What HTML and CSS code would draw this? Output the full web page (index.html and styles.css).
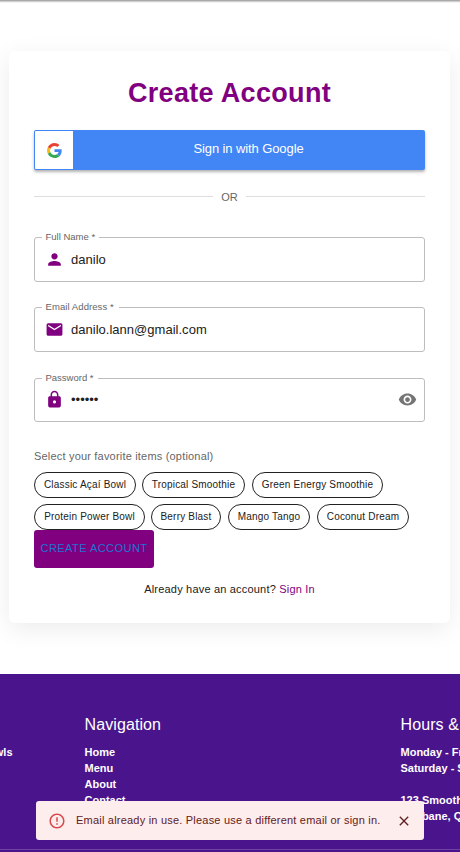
FILE: index.html
```html
<!DOCTYPE html>
<html lang="en">
<head>
<meta charset="utf-8">
<title>Create Account</title>
<link rel="stylesheet" href="styles.css">
</head>
<body>
<div class="appbar-edge"></div>
<main class="page">
  <section class="card">
    <h1 class="title">Create Account</h1>
    <button class="google" type="button">
      <span class="google-logo">
        <svg width="15" height="15" viewBox="0 0 48 48"><path fill="#EA4335" d="M24 9.5c3.54 0 6.71 1.22 9.21 3.6l6.85-6.85C35.9 2.38 30.47 0 24 0 14.62 0 6.51 5.38 2.56 13.22l7.98 6.19C12.43 13.72 17.74 9.5 24 9.5z"/><path fill="#4285F4" d="M46.98 24.55c0-1.57-.15-3.09-.38-4.55H24v9.02h12.94c-.58 2.96-2.26 5.48-4.78 7.18l7.73 6c4.51-4.18 7.09-10.36 7.09-17.65z"/><path fill="#FBBC05" d="M10.53 28.59c-.48-1.45-.76-2.99-.76-4.59s.27-3.14.76-4.59l-7.98-6.19C.92 16.46 0 20.12 0 24c0 3.88.92 7.54 2.56 10.78l7.97-6.19z"/><path fill="#34A853" d="M24 48c6.48 0 11.93-2.13 15.89-5.81l-7.73-6c-2.15 1.45-4.92 2.3-8.16 2.3-6.26 0-11.57-4.22-13.47-9.91l-7.98 6.19C6.51 42.62 14.62 48 24 48z"/></svg>
      </span>
      <span class="google-text">Sign in with Google</span>
    </button>
    <div class="divider"><span>OR</span></div>
    <form class="form">
      <fieldset class="field">
        <legend>Full Name *</legend>
        <svg class="icon" viewBox="0 0 24 24"><path d="M12 12c2.210 0 4-1.790 4-4s-1.790-4-4-4-4 1.790-4 4 1.790 4 4 4zm0 2c-2.670 0-8 1.340-8 4v2h16v-2c0-2.660-5.330-4-8-4z"/></svg>
        <span class="value">danilo</span>
      </fieldset>
      <fieldset class="field">
        <legend class="legend-email">Email Address *</legend>
        <svg class="icon" viewBox="0 0 24 24"><path d="M20 4H4c-1.100 0-1.990.9-1.990 2L2 18c0 1.100.9 2 2 2h16c1.100 0 2-.9 2-2V6c0-1.100-.9-2-2-2zm0 4-8 5-8-5V6l8 5 8-5v2z"/></svg>
        <span class="value">danilo.lann@gmail.com</span>
      </fieldset>
      <fieldset class="field password">
        <legend>Password *</legend>
        <svg class="icon" viewBox="0 0 24 24"><path d="M18 8h-1V6c0-2.760-2.240-5-5-5S7 3.240 7 6v2H6c-1.100 0-2 .9-2 2v10c0 1.100.9 2 2 2h12c1.100 0 2-.9 2-2V10c0-1.100-.9-2-2-2zm-6 9c-1.100 0-2-.9-2-2s.9-2 2-2 2 .9 2 2-.9 2-2 2zm3.100-9H8.900V6c0-1.710 1.390-3.100 3.100-3.100s3.100 1.390 3.100 3.100v2z"/></svg>
        <span class="value">••••••</span>
        <svg class="icon eye" viewBox="0 0 24 24"><path d="M12 4.500C7 4.500 2.730 7.610 1 12c1.730 4.390 6 7.500 11 7.500s9.270-3.110 11-7.500c-1.730-4.390-6-7.500-11-7.500zM12 17c-2.760 0-5-2.240-5-5s2.240-5 5-5 5 2.240 5 5-2.240 5-5 5zm0-8c-1.660 0-3 1.340-3 3s1.340 3 3 3 3-1.340 3-3-1.340-3-3-3z"/></svg>
      </fieldset>
      <p class="hint">Select your favorite items (optional)</p>
      <div class="chips">
        <div class="chip-row">
          <span class="chip w1">Classic Açaí Bowl</span><span class="chip w2">Tropical Smoothie</span><span class="chip w3">Green Energy Smoothie</span>
        </div>
        <div class="chip-row">
          <span class="chip w4">Protein Power Bowl</span><span class="chip w5">Berry Blast</span><span class="chip w6">Mango Tango</span><span class="chip w7">Coconut Dream</span>
        </div>
      </div>
      <button class="submit" type="button">CREATE ACCOUNT</button>
      <p class="signin">Already have an account? <a>Sign In</a></p>
    </form>
  </section>
</main>
<footer class="footer">
  <div class="col about"><h2>&nbsp;</h2><p>Fresh smoothies and bowls</p></div>
  <div class="col nav"><h2>Navigation</h2><p>Home</p><p>Menu</p><p>About</p><p>Contact</p></div>
  <div class="col hours"><h2>Hours &amp; Location</h2><p>Monday - Friday</p><p>Saturday - Sunday</p><p>&nbsp;</p><p>123 Smoothie St</p><p>Brisbane, QLD</p></div>
  <div class="rule"></div>
</footer>
<div class="snackbar">
  <svg class="alert" viewBox="0 0 24 24"><path d="M11 15h2v2h-2zm0-8h2v6h-2zm.99-5C6.470 2 2 6.480 2 12s4.470 10 9.990 10C17.520 22 22 17.520 22 12S17.520 2 11.990 2zM12 20c-4.420 0-8-3.580-8-8s3.580-8 8-8 8 3.580 8 8-3.580 8-8 8z"/></svg>
  <span class="message">Email already in use. Please use a different email or sign in.</span>
  <svg class="close" viewBox="0 0 24 24"><path d="M19 6.410 17.590 5 12 10.590 6.410 5 5 6.410 10.590 12 5 17.590 6.410 19 12 13.410 17.590 19 19 17.590 13.410 12z"/></svg>
</div>
</body>
</html>
```

FILE: styles.css
```css
* { box-sizing: border-box; }
body {
  margin: 0;
  height: 852px;
  overflow: hidden;
  font-family: "Liberation Sans", Arial, sans-serif;
  color: #212121;
  background: #fff;
}
h1, h2, p { margin: 0; }
.appbar-edge {
  height: 3px;
  background: linear-gradient(#aaa 0 1px, #d0d0d0 1px 2px, #f3f3f3 2px 3px);
}
.page {
  height: 671px;
  padding: 48px 10px 0 9px;
}
.card {
  height: 572px;
  padding: 22px 25px 0;
  border-radius: 6px;
  background: #fff;
  box-shadow: 0 6px 25px rgba(0, 0, 0, .08);
}
.title {
  height: 57px;
  line-height: 40px;
  font-size: 27px;
  text-align: center;
  color: purple;
  letter-spacing: .33px;
}
.google {
  display: flex;
  width: 391px;
  height: 40px;
  padding: 1px;
  border: 0;
  border-radius: 2px;
  background: #4285f4;
  box-shadow: 0 2px 3px rgba(0, 0, 0, .3);
  color: #fff;
}
.google-logo {
  display: flex;
  align-items: center;
  justify-content: center;
  width: 38px;
  height: 38px;
  border-radius: 1px 0 0 1px;
  background: #fff;
}
.google-text {
  flex: 1;
  line-height: 35px;
  font-family: "Liberation Sans", Arial, sans-serif;
  font-size: 13px;
  letter-spacing: -.1px;
  text-align: center;
}
.divider {
  display: flex;
  align-items: center;
  gap: 8px;
  height: 14px;
  margin-top: 19px;
  font-size: 11px;
  line-height: 14px;
  color: #666;
}
.divider span { padding-top: 1px; }
.divider::before, .divider::after {
  content: "";
  flex: 1;
  height: 1px;
  background: #dedede;
}
.form { padding-top: 29px; }
.field {
  display: flex;
  align-items: center;
  width: 391px;
  height: 50px;
  margin: 0 0 20px;
  padding: 0 7px 4px 10px;
  border: 1px solid #bdbdbd;
  border-radius: 3px;
}
.field legend {
  height: 10px;
  margin-left: -3px;
  padding: 0 4px 0 3.5px;
  line-height: 10px;
  font-size: 9.5px;
  color: #666;
}
.field .legend-email { padding-right: 5px; letter-spacing: .08px; }
.password {
  height: 49px;
  margin-top: 21px;
  padding-bottom: 5px;
}
.icon {
  flex: none;
  width: 19px;
  height: 19px;
  fill: purple;
}
.value {
  margin-left: 7px;
  font-size: 13px;
  letter-spacing: .02px;
}
.eye { margin-left: auto; fill: #757575; }
.hint {
  height: 24px;
  line-height: 16px;
  margin-top: 26px;
  font-size: 11px;
  letter-spacing: .19px;
  color: #666;
}
.chips {
  display: flex;
  flex-direction: column;
  gap: 6px;
}
.chip-row { display: flex; gap: 7px; }
.chip {
  height: 26px;
  border: 1px solid #212121;
  border-radius: 13px;
  line-height: 24px;
  font-size: 10px;
  letter-spacing: .19px;
  text-align: center;
  white-space: nowrap;
}
.w1 { width: 102px; margin-right: -1px; }
.w2 { width: 103px; }
.w3 { width: 131px; }
.w4 { width: 111px; margin-right: -1px; }
.w5 { width: 70px; }
.w6 { width: 82px; }
.w7 { width: 92px; }
.submit {
  display: block;
  width: 120px;
  height: 38px;
  padding: 0 0 2px;
  border: 0;
  border-radius: 3px;
  background: purple;
  color: #1976d2;
  font-family: inherit;
  font-size: 11px;
  letter-spacing: .45px;
  white-space: nowrap;
}
.signin {
  margin-top: 13px;
  line-height: 16px;
  font-size: 11px;
  letter-spacing: .19px;
  text-align: center;
}
.signin a { color: purple; }
.footer {
  display: grid;
  grid-template-columns: 158.5px 316px 157.5px;
  justify-content: start;
  height: 178px;
  margin-left: -74px;
  width: 632px;
  padding-top: 40px;
  background: #4a148c;
  color: #fff;
  white-space: nowrap;
}
.col h2 {
  height: 30px;
  line-height: 21px;
  font-size: 16px;
  font-weight: 400;
  letter-spacing: .1px;
}
.col p {
  line-height: 16px;
  font-size: 11px;
  font-weight: 700;
}
.about { padding-right: 72px; display: flex; flex-direction: column; align-items: flex-end; }
.rule {
  grid-column: 1 / -1;
  align-self: end;
  height: 1px;
  margin-bottom: 2px;
  background: #6e43a3;
}
.snackbar {
  position: absolute;
  left: 36px;
  top: 801px;
  display: flex;
  align-items: center;
  width: 388px;
  height: 39px;
  padding: 0 12px 0 12px;
  border-radius: 3px;
  background: #fdeded;
  color: #5f2120;
}
.alert { width: 18px; height: 18px; fill: #d9484a; }
.message {
  margin-left: 10px;
  font-size: 11px;
  line-height: 14px;
  letter-spacing: .21px;
  padding-bottom: 1px;
  white-space: nowrap;
}
.close { width: 16px; height: 16px; margin-left: auto; fill: #5f2120; }
```
